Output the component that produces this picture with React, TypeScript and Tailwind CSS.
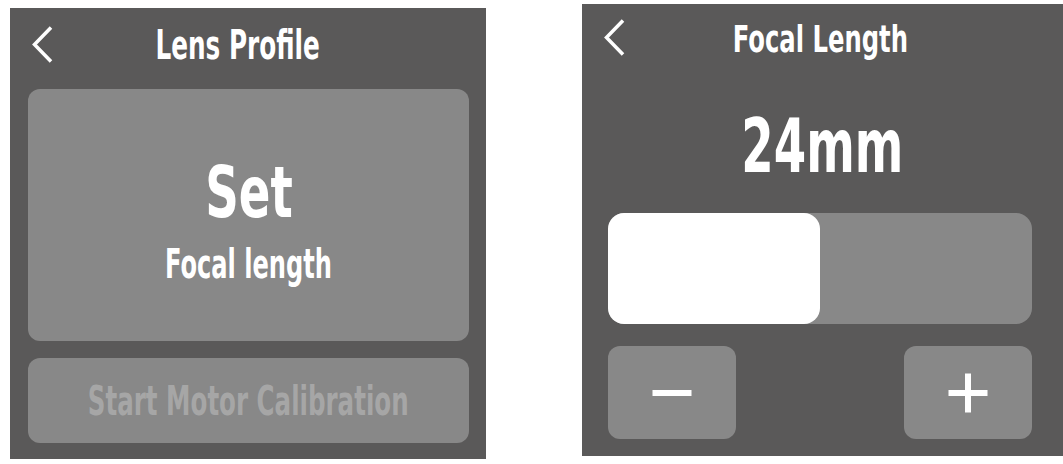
const FONT = "font-['Liberation_Sans_Narrow','DejaVu_Sans_Condensed','DejaVu_Sans',sans-serif] font-bold";

// DejaVu Condensed is still much wider than the device's DIN-style face, so squeeze it horizontally
function Narrow({ className, children }: { className: string; children: React.ReactNode }) {
  return <span className={`${FONT} inline-block whitespace-nowrap origin-center ${className}`}>{children}</span>;
}

function Chevron() {
  return (
    <svg width="24" height="38" viewBox="0 0 24 38" fill="none" className="mt-[5px]">
      <polyline points="21,1.5 4.5,18.5 21,35.5" stroke="white" strokeWidth="3.5" />
    </svg>
  );
}

function LensProfile() {
  return (
    <div className="mt-[8px] ml-[10px] flex h-[451px] w-[476px] flex-col bg-[#5a5959] pt-[15px]">
      <div className="grid h-[44px] grid-cols-[40px_1fr_60px] items-start px-[20px]">
        <div className="-mt-[2px]">
          <Chevron />
        </div>
        <h1 className="text-center text-white">
          <Narrow className="text-[41px] leading-[44px] scale-x-[0.67]">Lens Profile</Narrow>
        </h1>
        <div />
      </div>

      <div className="ml-[18px] mr-[17px] mt-[22px] flex h-[252px] flex-col items-center rounded-[12px] bg-[#888888] pt-[68px] text-white">
        <Narrow className="text-[71px] leading-[71px] scale-x-[0.73]">Set</Narrow>
        <Narrow className="mt-[16px] text-[40px] leading-[40px] scale-x-[0.67]">Focal length</Narrow>
      </div>

      <button className="ml-[18px] mr-[17px] mt-[17px] flex h-[85px] items-center justify-center rounded-[12px] bg-[#888888] text-[#a6a6a6]">
        <Narrow className="text-[41px] leading-[44px] scale-x-[0.665]">Start Motor Calibration</Narrow>
      </button>
    </div>
  );
}

function FocalLength() {
  const pct = 50;
  return (
    <div className="ml-[96px] mt-[4px] flex h-[452px] w-[481px] flex-col bg-[#5a5959] pt-[13px]">
      <div className="grid h-[44px] grid-cols-[40px_1fr_44px] items-start px-[20px]">
        <div className="-mt-[3px]">
          <Chevron />
        </div>
        <h1 className="text-center text-white">
          <Narrow className="text-[38px] leading-[44px] scale-x-[0.71]">Focal Length</Narrow>
        </h1>
        <div />
      </div>

      <div className="mt-[48px] text-center text-white">
        <Narrow className="text-[75px] leading-[75px] scale-x-[0.69]">24mm</Narrow>
      </div>

      <div className="ml-[26px] mr-[31px] mt-[29px] flex h-[111px] rounded-[16px] bg-[#888888]">
        <div className="h-full rounded-[16px] bg-white" style={{ width: `${pct}%` }} />
      </div>

      <div className="ml-[26px] mr-[31px] mt-[22px] flex justify-between">
        <button className="flex h-[93px] w-[128px] items-center justify-center rounded-[12px] bg-[#888888]">
          <svg width="40" height="40" viewBox="0 0 40 40">
            <line x1="0.5" y1="20" x2="39.5" y2="20" stroke="white" strokeWidth="6" />
          </svg>
        </button>
        <button className="flex h-[93px] w-[128px] items-center justify-center rounded-[12px] bg-[#888888]">
          <svg width="40" height="40" viewBox="0 0 40 40">
            <line x1="0.5" y1="20" x2="39.5" y2="20" stroke="white" strokeWidth="6" />
            <line x1="20" y1="0.5" x2="20" y2="39.5" stroke="white" strokeWidth="6" />
          </svg>
        </button>
      </div>
    </div>
  );
}

export default function App() {
  return (
    <div className="flex h-[464px] w-[1063px] items-start overflow-hidden bg-white">
      <LensProfile />
      <FocalLength />
    </div>
  );
}
